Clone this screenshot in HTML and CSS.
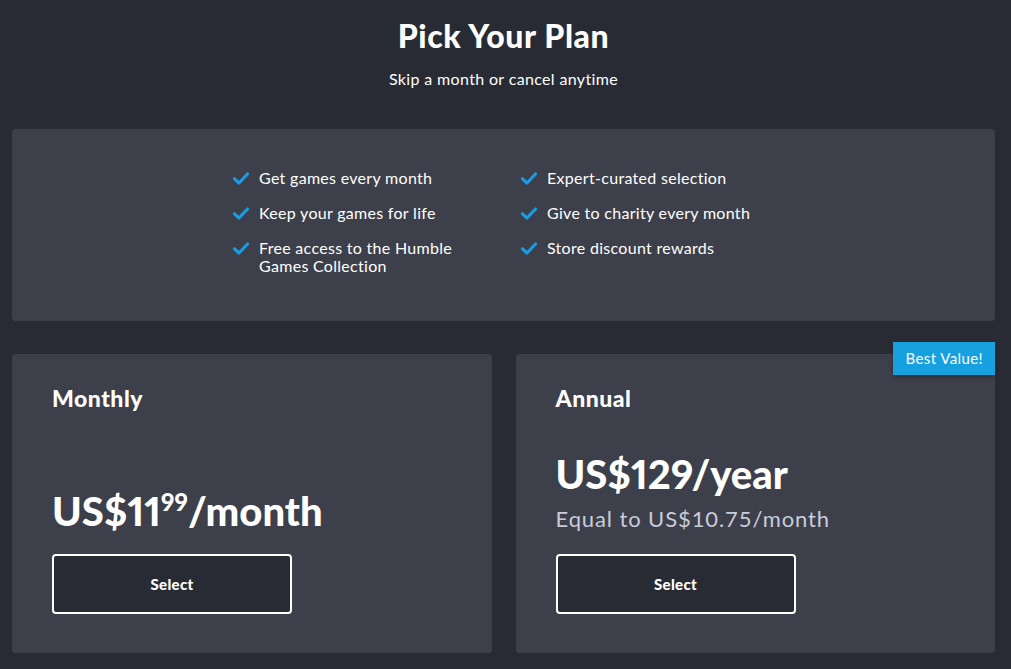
FILE: index.html
```html
<!DOCTYPE html>
<html>
<head>
    <title>Pick Your Plan</title>
    <link rel="stylesheet" href="styles.css">
</head>
<body>

<div class="page">
    <div class="intro">
        <h1>Pick Your Plan</h1>
        <p>Skip a month or cancel anytime</p>
    </div>

    <div class="perks">
        <ul class="perk-list">
            <li><svg class="tick" viewBox="0 0 16 13"><path d="M1.5 6.8 L6 11 L14.5 2" /></svg><span>Get games every month</span></li>
            <li><svg class="tick" viewBox="0 0 16 13"><path d="M1.5 6.8 L6 11 L14.5 2" /></svg><span>Keep your games for life</span></li>
            <li><svg class="tick" viewBox="0 0 16 13"><path d="M1.5 6.8 L6 11 L14.5 2" /></svg><span>Free access to the Humble Games Collection</span></li>
        </ul>
        <ul class="perk-list">
            <li><svg class="tick" viewBox="0 0 16 13"><path d="M1.5 6.8 L6 11 L14.5 2" /></svg><span>Expert-curated selection</span></li>
            <li><svg class="tick" viewBox="0 0 16 13"><path d="M1.5 6.8 L6 11 L14.5 2" /></svg><span>Give to charity every month</span></li>
            <li><svg class="tick" viewBox="0 0 16 13"><path d="M1.5 6.8 L6 11 L14.5 2" /></svg><span>Store discount rewards</span></li>
        </ul>
    </div>

    <div class="plans">
        <div class="plan">
            <h2>Monthly</h2>
            <div class="plan-bottom">
                <div class="price">US$11<sup>99</sup>/month</div>
                <button class="select">Select</button>
            </div>
        </div>
        <div class="plan">
            <span class="badge">Best Value!</span>
            <h2>Annual</h2>
            <div class="plan-bottom">
                <div class="price">US$129/year</div>
                <div class="equal">Equal to US$10.75/month</div>
                <button class="select">Select</button>
            </div>
        </div>
    </div>
</div>

</body>
</html>
```

FILE: styles.css
```css
body {
    margin: 0;
    background-color: #282b34;
    color: #ffffff;
    font-family: Lato, "Open Sans", sans-serif;
}

.page {
    padding: 0 16px 0 12px;
}

.intro {
    text-align: center;
    padding-top: 17px;
}

.intro h1 {
    margin: 0;
    font-size: 32px;
    font-weight: 900;
    line-height: 38px;
    letter-spacing: 0.6px;
}

.intro p {
    margin: 15px 0 0;
    font-size: 16px;
    line-height: 18px;
    letter-spacing: 0.35px;
}

.perks {
    margin-top: 41px;
    background-color: #3d3f4b;
    border-radius: 4px;
    height: 192px;
    box-sizing: border-box;
    padding: 40px 0 0 7px;
    display: flex;
    justify-content: center;
    gap: 28px;
}

.perk-list {
    list-style: none;
    margin: 0;
    padding: 0;
    width: 260px;
}

.perk-list li {
    display: flex;
    align-items: flex-start;
    gap: 10px;
    font-size: 16px;
    line-height: 18px;
    letter-spacing: 0.3px;
    margin-bottom: 17px;
    padding-right: 30px;
}

.tick {
    width: 16px;
    height: 13px;
    flex-shrink: 0;
    margin-top: 3px;
}

.tick path {
    fill: none;
    stroke: #1b9be3;
    stroke-width: 3.2;
    stroke-linecap: round;
    stroke-linejoin: round;
}

.plans {
    margin-top: 33px;
    display: grid;
    grid-template-columns: 1fr 1fr;
    gap: 24px;
}

.plan {
    position: relative;
    background-color: #3d3f4b;
    border-radius: 4px;
    height: 299px;
    box-sizing: border-box;
    padding: 30px 40px 39px;
    display: flex;
    flex-direction: column;
    justify-content: space-between;
}

.plan h2 {
    margin: 0;
    font-size: 23px;
    font-weight: 900;
    line-height: 28px;
    letter-spacing: 0.5px;
}

.price {
    font-size: 40px;
    font-weight: 900;
    line-height: 46px;
    font-variant-numeric: proportional-nums;
}

.price sup {
    font-size: 24px;
    line-height: 0;
    vertical-align: 15px;
}

.equal {
    font-size: 22px;
    color: #c9ccd9;
    line-height: 24px;
    letter-spacing: 0.9px;
    margin-top: 10px;
    padding-bottom: 3px;
}

.select {
    display: block;
    margin-top: 20px;
    width: 240px;
    height: 60px;
    background-color: #282b34;
    border: 2px solid #ffffff;
    border-radius: 4px;
    color: #ffffff;
    font-family: Lato, sans-serif;
    font-size: 15px;
    font-weight: 900;
    letter-spacing: 0.3px;
    cursor: pointer;
}

.badge {
    position: absolute;
    top: -12px;
    right: 0;
    background-color: #17a0e0;
    color: #ffffff;
    font-size: 15px;
    line-height: 33px;
    letter-spacing: 0.4px;
    padding: 0 12px 0 13px;
    box-shadow: 0 2px 4px rgba(0, 0, 0, 0.3);
}
```
